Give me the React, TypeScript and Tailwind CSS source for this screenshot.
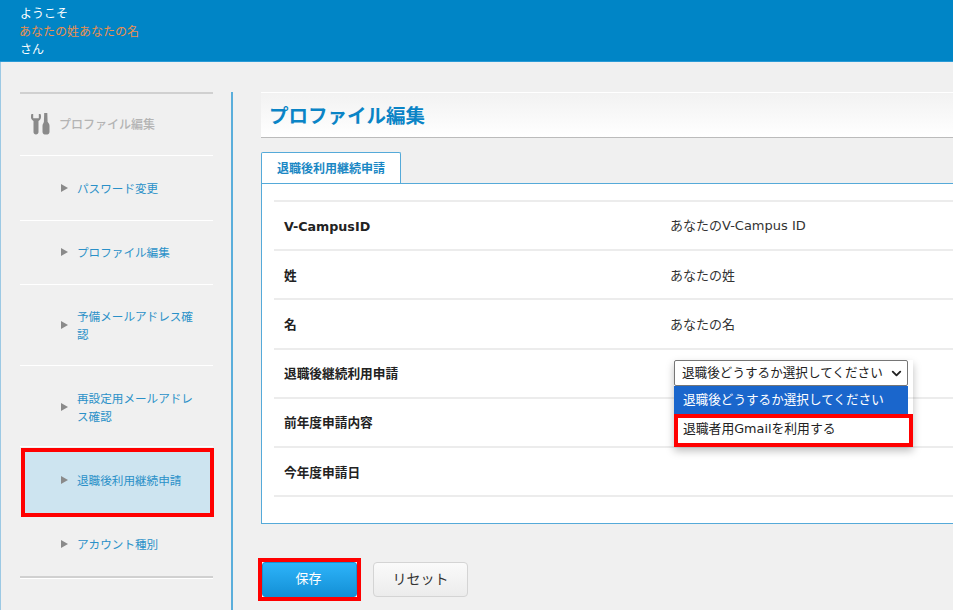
import { ChevronDown } from 'lucide-react'

const NAV = [
  { label: 'パスワード変更', h: 'h-[65px]', pad: 'pb-[1px]' },
  { label: 'プロファイル編集', h: 'h-[64px]', pad: 'pb-[1px]' },
  { label: '予備メールアドレス確認', h: 'h-[81px]', pad: '' },
  { label: '再設定用メールアドレス確認', h: 'h-[81px]', pad: 'pt-[2px]' },
]

const ROWS = [
  { label: 'V-CampusID', value: 'あなたのV-Campus ID' },
  { label: '姓', value: 'あなたの姓' },
  { label: '名', value: 'あなたの名' },
  { label: '退職後継続利用申請', value: '' },
  { label: '前年度申請内容', value: '' },
  { label: '今年度申請日', value: '' },
]

function ToolsIcon() {
  return (
    <svg width="20" height="22" viewBox="0 0 20 22" fill="#8a8a8a">
      <path d="M0.500 1C-.3 2.500-.2 5 .6 6.300c.5.800 1.200 1.300 1.900 1.600V19c0 1.600 1 2.500 2.500 2.500S7.500 20.600 7.500 19V7.900c.7-.3 1.400-.8 1.900-1.600C10.200 5 10.300 2.500 9.500 1L7.800 1v4.200H2.200V1H.5z" />
      <path d="M13.200 0h3.100l.3 8.800.9 1.300c.6.800 1 1.600 1 2.600V19c0 1.600-1.300 2.600-3.500 2.600S11.500 20.600 11.500 19v-6.300c0-1 .4-1.800 1-2.600l.4-1.300L13.200 0z" />
    </svg>
  )
}

function NavLabel({ label }: { label: string }) {
  return (
    <>
      <span className="mr-[9px] h-0 w-0 shrink-0 border-y-[4px] border-l-[7px] border-y-transparent border-l-[#8a8a8a]" />
      <span className="text-[11.600px] leading-[18px] text-[#2a90c8]">{label}</span>
    </>
  )
}

export default function App() {
  return (
    <div className="h-[610px] w-[953px] overflow-hidden bg-[#f0f0f0] font-['Noto_Sans_CJK_JP','Noto_Sans',sans-serif] text-[#222]">
      <header className="flex h-[62px] flex-col border-b border-b-[#2a9ad6] bg-[#0085c6] pl-[20px] pt-[4px] text-[12px] leading-[18px] text-white">
        <span>ようこそ</span>
        <span className="-ml-px text-[#ea8f50]">あなたの姓あなたの名</span>
        <span>さん</span>
      </header>

      <div className="flex h-[548px] border-l border-l-[#9cc9e4] pt-[30px]">
        <aside className="w-[232px] shrink-0 border-r-2 border-r-[#5aaedb] pr-[18px] pl-[19px]">
          <div className="border-t-2 border-t-[#d0d0d0]">
            <div className="flex h-[62px] items-center border-b border-b-white pb-[2px] pl-[11px]">
              <ToolsIcon />
              <span className="ml-[8px] text-[12px] font-medium text-[#b4b4b4]">プロファイル編集</span>
            </div>
            {NAV.map((item) => (
              <div key={item.label} className={`flex ${item.h} ${item.pad} items-center border-b border-b-white pl-[41px] pr-[20px]`}>
                <NavLabel label={item.label} />
              </div>
            ))}
            <div className="-mr-px ml-px mt-px flex h-[69px] items-center border-[4px] border-[#ff0000] bg-[#cde4f0] pb-[6px] pl-[36px]">
              <NavLabel label="退職後利用継続申請" />
            </div>
            <div className="flex h-[59px] items-center pb-[6px] pl-[41px]">
              <NavLabel label="アカウント種別" />
            </div>
            <div className="h-[3px] border-b border-b-white bg-[#d0d0d0]" />
          </div>
        </aside>

        <main className="min-w-0 flex-1 pl-[28px]">
          <h1 className="flex h-[46px] items-center border-t border-t-white border-b border-b-[#bbbbbb] bg-gradient-to-b from-[#f2f2f2] to-white pb-px pl-[8px] text-[19.500px] font-bold text-[#0a84c6]">
            プロファイル編集
          </h1>

          <div className="mt-[14px] flex h-[31px] w-[140px] items-center justify-center rounded-t-[2px] border border-b-0 border-[#55aad9] bg-white text-[12px] font-bold text-[#1a87c4]">
            退職後利用継続申請
          </div>

          <div className="relative h-[341px] border border-r-0 border-[#55aad9] bg-white pl-[12px] pt-[16px] font-['DejaVu_Sans','Noto_Sans_CJK_JP',sans-serif]">
            <div className="border-t-2 border-t-[#ececec]">
              {ROWS.map((row) => (
                <div key={row.label} className="flex h-[49.200px] items-center border-b-2 border-b-[#ececec] pl-[10px] pt-[1px]">
                  <span className="w-[386px] shrink-0 text-[12.700px] font-bold">{row.label}</span>
                  <span className="text-[13px] text-[#333]">{row.value}</span>
                </div>
              ))}
            </div>

            <div className="absolute left-[412px] top-[176px] w-[239px] shadow-[0_4px_8px_rgba(0,0,0,0.25)]">
              <div className="flex h-[26px] w-[234px] items-center justify-between rounded-[2px] border border-[#767676] bg-white pl-[7px] pr-[3px] text-[12.600px] text-[#222]">
                <span>退職後どうするか選択してください</span>
                <ChevronDown size={15} strokeWidth={3} />
              </div>
              <div className="flex h-[28px] w-[234px] items-center bg-[#1a66cc] pl-[9px] text-[12.600px] text-white">
                退職後どうするか選択してください
              </div>
              <div className="flex h-[33px] items-center border-[4px] border-[#ff0000] bg-white pb-[3px] pl-[5px] text-[12.800px] text-[#222]">
                退職者用Gmailを利用する
              </div>
            </div>
          </div>

          <div className="mt-[34px] -ml-[3px] flex items-center">
            <div className="border-[4px] border-[#ff0000] bg-white">
              <button className="block h-[35px] w-[95px] rounded-[3px] border border-[#1a8fd0] bg-gradient-to-b from-[#2db4fa] to-[#1390d6] pb-[3px] pr-[2px] text-[13px] text-white">
                保存
              </button>
            </div>
            <button className="ml-[12px] h-[35px] w-[95px] rounded-[4px] border border-[#d4d4d4] bg-gradient-to-b from-[#fafafa] to-[#ececec] pb-[3px] text-[14px] text-[#333]">
              リセット
            </button>
          </div>
        </main>
      </div>
    </div>
  )
}
